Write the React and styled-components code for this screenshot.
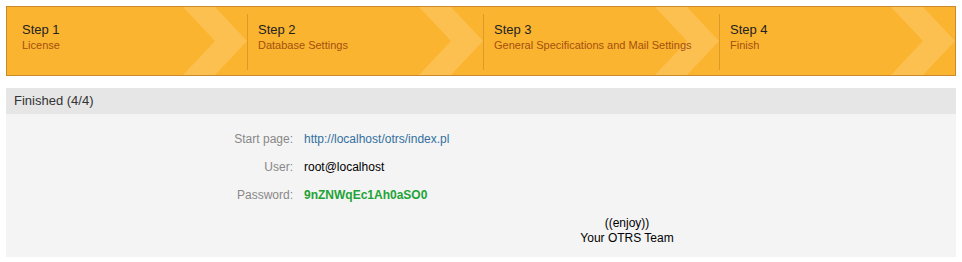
import React from 'react';
import styled, { createGlobalStyle } from 'styled-components';

const colors = {
  orange: '#fbb42f',
  orangeLight: '#fcc050',
  orangeBorder: '#c98a2e',
  separator: '#dc9a2c',
  subtitle: '#a5500f',
  text: '#222',
  label: '#888',
  link: '#33709f',
  green: '#21a336',
  headerBg: '#e6e6e6',
  contentBg: '#f4f4f4',
};

const steps = [
  { title: 'Step 1', name: 'License' },
  { title: 'Step 2', name: 'Database Settings' },
  { title: 'Step 3', name: 'General Specifications and Mail Settings' },
  { title: 'Step 4', name: 'Finish' },
];

const fields = [
  { label: 'Start page:', value: 'http://localhost/otrs/index.pl', kind: 'link' },
  { label: 'User:', value: 'root@localhost', kind: 'plain' },
  { label: 'Password:', value: '9nZNWqEc1Ah0aSO0', kind: 'password' },
];

const App = () => (
  <>
    <GlobalStyle />
    <Page>
      <StepBar>
        {steps.map(({ title, name }, i) => (
          <Step key={title} first={i === 0}>
            <StepTitle>{title}</StepTitle>
            <StepName>{name}</StepName>
          </Step>
        ))}
      </StepBar>

      <Widget>
        <WidgetHeader>Finished (4/4)</WidgetHeader>
        <WidgetContent>
          {fields.map(({ label, value, kind }) => (
            <FieldRow key={label}>
              <Label>{label}</Label>
              <Value kind={kind}>{value}</Value>
            </FieldRow>
          ))}
          <FieldRow>
            <span />
            <Signature>
              ((enjoy))
              <br />
              Your OTRS Team
            </Signature>
          </FieldRow>
        </WidgetContent>
      </Widget>
    </Page>
  </>
);

const GlobalStyle = createGlobalStyle`
  body {
    margin: 0;
    background: #fff;
    font-family: "Liberation Sans", Arial, sans-serif;
  }
`;

const Page = styled.div`
  padding: 6px;
  width: 950px;
`;

const StepBar = styled.ul`
  display: flex;
  margin: 0;
  padding: 0;
  list-style: none;
  height: 68px;
  background: ${colors.orange};
  border: 1px solid ${colors.orangeBorder};
`;

const Step = styled.li`
  position: relative;
  flex: 1;
  padding: 15px 0 0 ${p => (p.first ? '15px' : '11px')};
  overflow: hidden;

  &::before {
    content: '';
    display: ${p => (p.first ? 'none' : 'block')};
    position: absolute;
    left: 0;
    top: 7px;
    bottom: 5px;
    width: 1px;
    background: ${colors.separator};
  }

  &::after {
    content: '';
    position: absolute;
    top: 0;
    right: 0;
    width: 64px;
    height: 100%;
    background: ${colors.orangeLight};
    clip-path: polygon(0 0, 50% 0, 100% 50%, 50% 100%, 0 100%, 50% 50%);
  }
`;

const StepTitle = styled.div`
  position: relative;
  z-index: 1;
  font-size: 13px;
  line-height: 16px;
  color: ${colors.text};
`;

const StepName = styled.div`
  position: relative;
  z-index: 1;
  font-size: 11px;
  line-height: 14px;
  color: ${colors.subtitle};
`;

const Widget = styled.div`
  margin-top: 12px;
`;

const WidgetHeader = styled.div`
  height: 26px;
  line-height: 25px;
  padding-left: 8px;
  background: ${colors.headerBg};
  font-size: 13px;
  color: #333;
`;

const WidgetContent = styled.div`
  background: ${colors.contentBg};
  padding: 18px 0 11px;
  display: flex;
  flex-direction: column;
  gap: 13px;
`;

const FieldRow = styled.div`
  display: grid;
  grid-template-columns: 287px 1fr;
  column-gap: 11px;
  font-size: 12px;
  line-height: 15px;
`;

const Label = styled.div`
  text-align: right;
  color: ${colors.label};
`;

const Value = styled.div`
  color: ${p =>
    p.kind === 'link' ? colors.link : p.kind === 'password' ? colors.green : '#000'};
  font-weight: ${p => (p.kind === 'password' ? 'bold' : 'normal')};
`;

const Signature = styled.div`
  text-align: center;
  color: #000;
  padding-right: 6px;
`;

export default App;
